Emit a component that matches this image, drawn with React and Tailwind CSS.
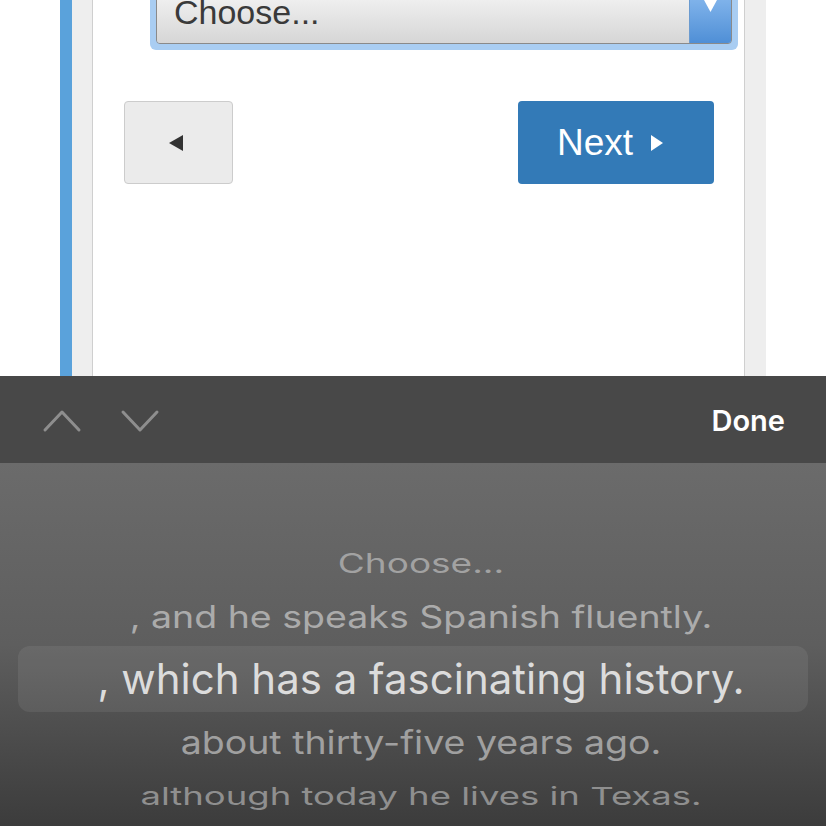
import React from "react";

const picker = [
  { text: "Choose...", h: "h-[50px]", cls: "text-[37px] text-[#a2a2a2] scale-y-[0.72]" },
  { text: ", and he speaks Spanish fluently.", h: "h-[58px]", cls: "text-[37.5px] text-[#ababab] scale-y-[0.82]" },
  { text: "about thirty-five years ago.", h: "h-[62px]", cls: "text-[37.5px] text-[#a0a0a0] scale-y-[0.85]" },
  { text: "although today he lives in Texas.", h: "h-[44px]", cls: "text-[36.5px] text-[#8f8f8f] scale-y-[0.68]" },
];

const PickerRow = ({ row }) => (
  <div className={`${row.h} flex items-center justify-center`}>
    <span className={`block leading-none ${row.cls}`}>{row.text}</span>
  </div>
);

const Chevron = ({ up }) => (
  <svg width="40" height="26" viewBox="0 0 40 26" fill="none">
    <polyline
      points={up ? "3,22 20,4 37,22" : "3,4 20,22 37,4"}
      stroke="#8e8e8e"
      strokeWidth="3"
      strokeLinecap="round"
      strokeLinejoin="round"
    />
  </svg>
);

export default function App() {
  return (
    <div className="w-[826px] h-[826px] overflow-hidden flex flex-col bg-white font-['Inter',sans-serif]">
      {/* page behind the picker */}
      <div className="h-[376px] flex shrink-0 pl-[60px] overflow-hidden font-['Liberation_Sans',Arial,sans-serif]">
        <div className="w-[12px] bg-[#5aa2db]" />
        <div className="w-[21px] bg-[#eeeeee] border-r border-[#cfcfcf]" />
        <div className="w-[652px] bg-white border-r border-[#cfcfcf] flex flex-col">
          <div className="-mt-[20px] ml-[57px] w-[588px] rounded-[6px] bg-[#a9cdf2] p-[6px]">
            <div className="h-[58px] flex rounded-[4px] border border-[#8a8a8a] overflow-hidden">
              <div className="flex-1 flex items-end pl-[17px] pb-[14px] leading-none bg-gradient-to-b from-[#f6f6f6] to-[#d6d6d6] text-[34px] text-[#3a3a3a]">
                Choose...
              </div>
              <div className="w-[42px] flex justify-center pt-[13px] bg-gradient-to-b from-[#8dbdf0] to-[#4f8fd6] border-l border-[#6b9bd0]">
                <svg width="13" height="12" viewBox="0 0 13 12">
                  <polygon points="0,0 13,0 6.5,12" fill="#ffffff" />
                </svg>
              </div>
            </div>
          </div>
          <div className="mt-[51px] flex justify-between pl-[31px] pr-[30px]">
            <button className="w-[109px] h-[83px] rounded-[4px] border border-[#cccccc] bg-[#ebebeb] flex items-center justify-center pr-[6px]">
              <svg width="14" height="16" viewBox="0 0 14 16">
                <polygon points="14,0 14,16 0,8" fill="#333333" />
              </svg>
            </button>
            <button className="w-[196px] h-[83px] rounded-[4px] bg-[#337ab7] flex items-center justify-center gap-[18px] text-white text-[37px] pr-[12px]">
              <span>Next</span>
              <svg width="12" height="16" viewBox="0 0 12 16">
                <polygon points="0,0 12,8 0,16" fill="#ffffff" />
              </svg>
            </button>
          </div>
        </div>
        <div className="w-[21px] bg-[#eeeeee]" />
        <div className="flex-1 bg-white" />
      </div>

      {/* keyboard accessory bar */}
      <div className="h-[87px] shrink-0 bg-[#484848] flex items-center pl-[42px] pr-[41px]">
        <div className="flex items-center gap-[38px] mt-[2px]">
          <Chevron up />
          <Chevron />
        </div>
        <div className="ml-auto text-white text-[29px] font-semibold mt-[2px]">Done</div>
      </div>

      {/* wheel picker */}
      <div className="flex-1 bg-gradient-to-b from-[#6b6b6b] via-[#5e5e5e] to-[#3c3c3c] pt-[75px]">
        <div className="pl-[16px]">
          <PickerRow row={picker[0]} />
          <PickerRow row={picker[1]} />
        </div>
        <div className="h-[66px] mx-[18px] rounded-[12px] bg-white/[0.07] flex items-center justify-center pl-[16px]">
          <span className="block leading-none text-[42px] text-[#dcdcdc]">
            , which has a fascinating history.
          </span>
        </div>
        <div className="pl-[16px]">
          <PickerRow row={picker[2]} />
          <PickerRow row={picker[3]} />
        </div>
      </div>
    </div>
  );
}
